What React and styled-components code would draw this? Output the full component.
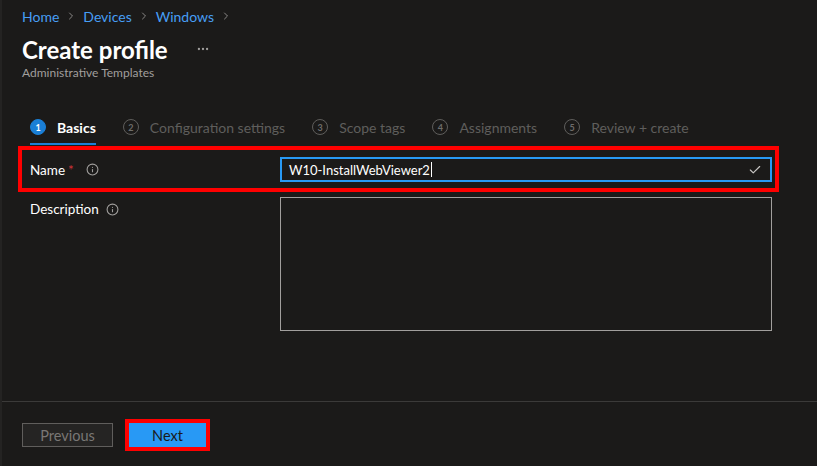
import React from 'react';
import styled, { createGlobalStyle } from 'styled-components';
import { ChevronRight, Info, Check, MoreHorizontal } from 'lucide-react';

const GlobalStyle = createGlobalStyle`
  html, body {
    margin: 0;
    padding: 0;
    background: #1b1a19;
  }
  body {
    font-family: Lato, "Noto Sans", sans-serif;
    color: #ffffff;
  }
`;

const steps = [
  { n: 1, text: 'Basics' },
  { n: 2, text: 'Configuration settings' },
  { n: 3, text: 'Scope tags' },
  { n: 4, text: 'Assignments' },
  { n: 5, text: 'Review + create' },
];

function App() {
  return (
    <>
      <GlobalStyle />
      <Page>
        <Main>
          <Header>
            <Crumbs>
              <Crumb>Home</Crumb>
              <ChevronRight size={12} color='#8a8886' />
              <Crumb>Devices</Crumb>
              <ChevronRight size={12} color='#8a8886' />
              <Crumb>Windows</Crumb>
              <ChevronRight size={12} color='#8a8886' />
            </Crumbs>
            <TitleRow>
              <Title>Create profile</Title>
              <MoreHorizontal size={14} color='#a19f9d' />
            </TitleRow>
            <Subtitle>Administrative Templates</Subtitle>
          </Header>

          <Tabs>
            {steps.map((step, i) => (
              <Tab key={step.n} active={i === 0}>
                <StepNum active={i === 0}>{step.n}</StepNum>
                <TabText active={i === 0}>{step.text}</TabText>
              </Tab>
            ))}
          </Tabs>

          <Form>
            <Highlight>
              <Row>
                <Label>
                  Name <Star>*</Star>
                  <Info size={13} color='#a19f9d' />
                </Label>
                <Field>
                  <FieldText>
                    W10-InstallWebViewer2
                    <Caret />
                  </FieldText>
                  <Check size={14} color='#c8c6c4' />
                </Field>
              </Row>
            </Highlight>
            <DescRow>
              <Label>
                Description
                <Info size={13} color='#a19f9d' />
              </Label>
              <TextArea />
            </DescRow>
          </Form>
        </Main>

        <Footer>
          <Button>Previous</Button>
          <Highlight>
            <Button primary>Next</Button>
          </Highlight>
        </Footer>
      </Page>
    </>
  );
}

export default App;

const Page = styled.div`
  height: 466px;
  display: flex;
  flex-direction: column;
  border-left: 2px solid #242322;
  box-sizing: border-box;
`;

const Main = styled.div`
  flex: 1;
`;

const Header = styled.div`
  padding: 6px 20px 0 20px;
`;

const Crumbs = styled.div`
  display: flex;
  align-items: center;
  gap: 6px;
  height: 20px;
  font-size: 14px;
`;

const Crumb = styled.span`
  color: #479ef5;
`;

const TitleRow = styled.div`
  display: flex;
  align-items: center;
  gap: 28px;
  margin-top: 7px;
  height: 32px;
`;

const Title = styled.h1`
  margin: 0;
  font-size: 24px;
  font-weight: 700;
  color: #ffffff;
`;

const Subtitle = styled.div`
  font-size: 12px;
  line-height: 16px;
  color: #a19f9d;
`;

const Tabs = styled.div`
  display: flex;
  gap: 27px;
  margin: 32px 0 0 28px;
`;

const Tab = styled.div`
  display: flex;
  align-items: center;
  gap: 11px;
  height: 32px;
  box-sizing: border-box;
  border-bottom: 2px solid ${(p) => (p.active ? '#1a7fd6' : 'transparent')};
  padding-bottom: 2px;
`;

const StepNum = styled.span`
  width: 16px;
  height: 16px;
  border-radius: 50%;
  box-sizing: border-box;
  display: flex;
  align-items: center;
  justify-content: center;
  font-size: 9px;
  font-weight: 700;
  background: ${(p) => (p.active ? '#1a7fd6' : 'transparent')};
  border: 1px solid ${(p) => (p.active ? '#1a7fd6' : '#5f5e5c')};
  color: ${(p) => (p.active ? '#ffffff' : '#6e6d6b')};
`;

const TabText = styled.span`
  font-size: 14px;
  font-weight: ${(p) => (p.active ? 700 : 400)};
  color: ${(p) => (p.active ? '#ffffff' : '#5f5e5c')};
`;

const Form = styled.div`
  margin: 1px 0 0 16px;
  width: 761px;
`;

const Highlight = styled.div`
  border: 4px solid #ff0000;
`;

const Row = styled.div`
  display: grid;
  grid-template-columns: 250px 492px;
  align-items: center;
  padding: 7px 3px 6px 8px;
`;

const DescRow = styled.div`
  display: grid;
  grid-template-columns: 250px 492px;
  align-items: start;
  padding: 5px 0 0 12px;
`;

const Label = styled.div`
  display: flex;
  align-items: center;
  gap: 7px;
  font-size: 13.5px;
  color: #ffffff;
  height: 24px;
`;

const Star = styled.span`
  color: #d13438;
  margin-left: -4px;
  margin-right: 5px;
`;

const Field = styled.div`
  height: 25px;
  box-sizing: border-box;
  border: 2px solid #2899f5;
  display: flex;
  align-items: center;
  justify-content: space-between;
  padding: 0 8px 0 7px;
`;

const FieldText = styled.span`
  display: flex;
  align-items: center;
  font-size: 13px;
  color: #ffffff;
`;

const Caret = styled.span`
  width: 1px;
  height: 15px;
  background: #ffffff;
  margin-left: 1px;
`;

const TextArea = styled.div`
  height: 134px;
  box-sizing: border-box;
  border: 1px solid #a19f9d;
`;

const Footer = styled.div`
  border-top: 1px solid #3b3a39;
  padding: 17px 20px 15px 20px;
  display: flex;
  align-items: center;
  gap: 12px;
`;

const Button = styled.div`
  box-sizing: border-box;
  height: 24px;
  width: ${(p) => (p.primary ? '77px' : '91px')};
  display: flex;
  align-items: center;
  justify-content: center;
  font-size: 14.5px;
  background: ${(p) => (p.primary ? '#2899f5' : '#252423')};
  color: ${(p) => (p.primary ? '#1b1a19' : '#797775')};
  border: 1px solid ${(p) => (p.primary ? '#2899f5' : '#605e5c')};
`;
